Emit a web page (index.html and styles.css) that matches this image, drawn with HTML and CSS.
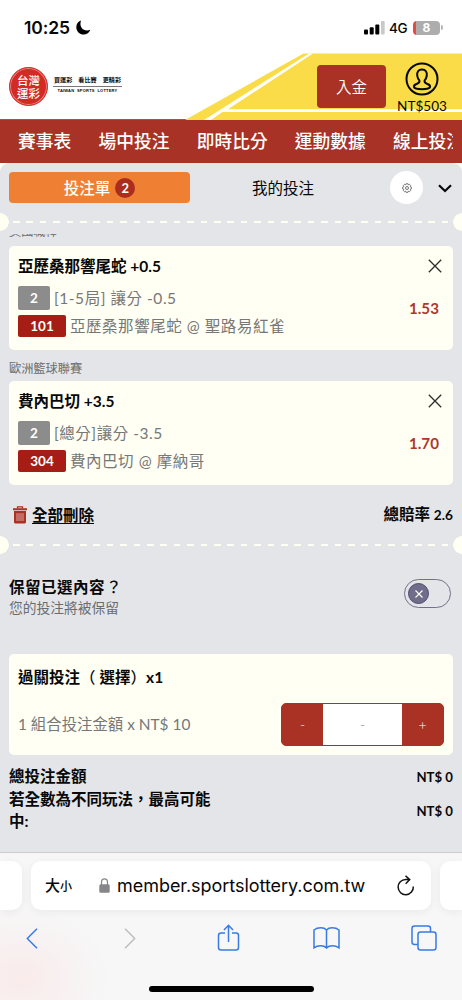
FILE: index.html
```html
<!DOCTYPE html>
<html lang="zh-Hant">
<head>
<meta charset="utf-8">
<meta name="viewport" content="width=device-width, initial-scale=1">
<title>台灣運彩</title>
<link rel="stylesheet" href="styles.css">
</head>
<body>
<div class="status">
  <span class="clock">10:25</span>
  <svg class="moon" width="15" height="15" viewBox="0 0 15 15"><path d="M5 .5C2 1.500 .3 4 .3 7.200C.3 11.300 3.500 14.500 7.600 14.500C10.800 14.500 13.300 12.800 14.300 9.800C10.500 11.100 7.600 10.200 5.900 8.200C4.300 6.300 4 3.400 5 .5Z"/></svg>
  <svg class="signal" width="21" height="14" viewBox="0 0 21 14"><rect x="0" y="8.500" width="4" height="5" rx="1"/><rect x="5.700" y="6.300" width="4" height="7.200" rx="1"/><rect x="11.300" y="3.500" width="4" height="10" rx="1"/><rect x="17" y="0" width="3.700" height="13.500" rx="1" fill="#c9c9c9"/></svg>
  <span class="network">4G</span>
  <span class="battery">8</span><span class="battery-tip"></span>
</div>
<header class="header">
  <svg class="stripes" width="462" height="67" viewBox="0 0 462 67"><path d="M303.500 .5H462V67H185Z" fill="#f9dc47"/><path d="M309 .5H313L228 56.200H462V59H222.500L211 67H204Z" fill="#fffefa"/></svg>
  <div class="brand">
    <div class="seal"><span>台灣</span><span>運彩</span></div>
    <div class="motto"><div class="motto-zh"><span>買運彩</span><span>看比賽</span><span>更精彩</span></div><div class="motto-en">TAIWAN&nbsp; SPORTS&nbsp; LOTTERY</div></div>
  </div>
  <button class="deposit">入金</button>
  <div class="account">
    <svg width="34" height="34" viewBox="0 0 34 34" fill="none" stroke="#080808" stroke-width="2"><circle cx="17" cy="17" r="15.500"/><path d="M17 7.500C13.300 7.500 11.800 10.200 12.200 13.500C12.500 15.800 13.300 17.300 14.400 18.400C15 20.600 13.700 21.100 11.500 22C9.400 22.800 8.600 23.600 9 25.200C9.500 26.600 13 27.200 17 27.200S24.500 26.600 25 25.200C25.400 23.600 24.600 22.800 22.500 22C20.300 21.100 19 20.600 19.600 18.400C20.700 17.300 21.500 15.800 21.800 13.500C22.200 10.200 20.700 7.500 17 7.500Z"/></svg>
    <span>NT$503</span>
  </div>
</header>
<nav class="nav"><div class="nav-list"><span>賽事表</span><span>場中投注</span><span>即時比分</span><span>運動數據</span><span>線上投注</span></div></nav>
<main class="slip">
  <div class="tabs">
    <div class="tab-active">投注單<span class="count">2</span></div>
    <div class="tab">我的投注</div>
    <div class="gear"><svg width="10" height="10" viewBox="0 0 10 10" fill="none" stroke="#555" stroke-width=".8"><path d="M4.200 .7H5.800L6.200 1.800L7.400 1.200L8.700 2.500L8.200 3.700L9.400 4.200V5.800L8.200 6.200L8.700 7.500L7.500 8.700L6.200 8.200L5.800 9.400H4.200L3.700 8.200L2.500 8.700L1.300 7.500L1.800 6.200L.6 5.800V4.200L1.800 3.700L1.300 2.500L2.500 1.300L3.700 1.800Z"/><circle cx="5" cy="5" r="1.500"/></svg></div>
    <svg class="chevron" width="14" height="9" viewBox="0 0 14 9"><path d="M1 1.200L7 7L13 1.200" fill="none" stroke="#080808" stroke-width="2.200"/></svg>
  </div>
  <div class="divider"></div>
  <div class="bets">
    <div class="league first">美國職棒</div>
    <section class="card">
      <div class="pick">
        <h2>亞歷桑那響尾蛇 +0.5</h2>
        <div class="line"><span class="tag">2</span><span class="text">[1-5局] 讓分 -0.5</span></div>
        <div class="line"><span class="tag code">101</span><span class="text">亞歷桑那響尾蛇 @ 聖路易紅雀</span></div>
      </div>
      <div class="side"><svg width="14" height="14" viewBox="0 0 14 14"><path d="M.8.8L13.200 13.200M13.200.8L.8 13.200" stroke="#2d2d2b" stroke-width="1.300"/></svg><b>1.53</b></div>
    </section>
    <div class="league">歐洲籃球聯賽</div>
    <section class="card">
      <div class="pick">
        <h2>費內巴切 +3.5</h2>
        <div class="line"><span class="tag">2</span><span class="text">[總分]讓分 -3.5</span></div>
        <div class="line"><span class="tag code">304</span><span class="text">費內巴切 @ 摩納哥</span></div>
      </div>
      <div class="side"><svg width="14" height="14" viewBox="0 0 14 14"><path d="M.8.8L13.200 13.200M13.200.8L.8 13.200" stroke="#2d2d2b" stroke-width="1.300"/></svg><b>1.70</b></div>
    </section>
  </div>
  <div class="actions">
    <svg width="14" height="18" viewBox="0 0 14 18"><path d="M4.500 2.500V.8H9.500V2.500" fill="none" stroke="#aa3123" stroke-width="1.200"/><path d="M0 2.200H14V4.200H0ZM1 5H13V16Q13 17.500 11.500 17.500H2.500Q1 17.500 1 16Z" fill="#aa3123"/><path d="M4 7.200V15M6 7.200V15M8 7.200V15M10 7.200V15" stroke="#e8c8c4" stroke-width=".8"/></svg>
    <a class="delete">全部刪除</a>
    <span class="odds">總賠率 <span class="odds-value">2.6</span></span>
  </div>
  <div class="divider"></div>
  <div class="keep">
    <div><h2 class="keep-title">保留已選內容<span class="question">？</span></h2><p>您的投注將被保留</p></div>
    <div class="toggle"><span class="knob"><svg width="10" height="10" viewBox="0 0 10 10"><path d="M1.500 1.500L8.500 8.500M8.500 1.500L1.500 8.500" stroke="#fff" stroke-width="1.100"/></svg></span></div>
  </div>
  <section class="stake">
    <h2>過關投注<span class="choice">（</span>選擇<span class="choice-end">）</span>x1</h2>
    <div class="stake-row"><span class="formula">1 組合投注金額 x NT$ 10</span>
      <div class="stepper"><span>-</span><span class="amount">-</span><span>+</span></div>
    </div>
  </section>
  <div class="total"><span>總投注金額</span><span class="money">NT$ 0</span></div>
  <div class="total"><span class="win">若全數為不同玩法，最高可能中:</span><span class="money">NT$ 0</span></div>
</main>
<footer class="browser">
  <div class="address-row">
    <div class="edge left"></div>
    <div class="address">
      <span class="size">大<small>小</small></span>
      <svg class="lock" width="11" height="15" viewBox="0 0 11 15"><path d="M2.500 7V4A3 3.200 0 0 1 8.500 4V7" fill="none" stroke="#85858a" stroke-width="1.200"/><rect x=".3" y="6.200" width="10.400" height="8.500" rx="1.500" fill="#85858a"/></svg>
      <span class="url">member.sportslottery.com.tw</span>
      <svg class="reload" width="18" height="21" viewBox="0 0 18 21" fill="none" stroke="#111" stroke-width="1.500"><path d="M16.300 11.500A7.600 7.600 0 1 1 8.700 4.500H12.500M8.500 .7L12.700 4.600L8.700 8.700"/></svg>
    </div>
    <div class="edge right"></div>
  </div>
  <div class="tools">
    <svg width="12" height="21" viewBox="0 0 12 21"><path d="M11 .8L1.300 10.500L11 20.200"/></svg>
    <svg class="off" width="12" height="21" viewBox="0 0 12 21"><path d="M1 .8L10.700 10.500L1 20.200"/></svg>
    <svg width="23" height="28" viewBox="0 0 22 28"><path d="M7.500 9H3.500Q1 9 1 11.500V23.500Q1 26 3.500 26H18.500Q21 26 21 23.500V11.500Q21 9 18.500 9H14.500M11 18V1.500M6.500 6L11 1.300L15.500 6"/></svg>
    <svg width="27" height="22" viewBox="0 0 27 22"><path d="M13.500 3Q11.500 .8 8 .8Q3.500 .8 1 3V20.800Q4 18.800 7.500 18.800Q11.500 18.800 13.500 21Q15.500 18.800 19.500 18.800Q23 18.800 26 20.800V3Q23.500 .8 19 .8Q15.500 .8 13.500 3V21"/></svg>
    <svg width="26" height="26" viewBox="0 0 26 26"><path d="M7 19.500H3.500Q1 19.500 1 17V3.500Q1 1 3.500 1H17Q19.500 1 19.500 3.500V7"/><rect x="7" y="7" width="18" height="18" rx="2.500"/></svg>
  </div>
  <div class="home"></div>
</footer>
</body>
</html>
```
FILE: styles.css
```css
* { box-sizing: border-box; }
body { margin: 0; width: 462px; height: 1000px; overflow: hidden; background: #fff; color: #080808; font-family: Lato, "Noto Sans CJK TC", sans-serif; }
svg { display: block; flex: none; }
h2, p { margin: 0; white-space: nowrap; }
h2 { font-size: 15.500px; line-height: 22px; font-weight: 700; }

.status { display: flex; align-items: center; height: 53px; padding: 2px 19px 0 24px; font-family: Inter, sans-serif; }
.clock { width: 48px; font-size: 17.500px; font-weight: 600; letter-spacing: -.1px; }
.moon { margin-left: 4px; }
.signal { margin-left: auto; }
.network { margin-left: 4px; width: 20px; font-size: 13.500px; letter-spacing: -.3px; font-weight: 500; }
.battery { margin-left: 4px; width: 27px; height: 14px; border-radius: 4px; background: linear-gradient(90deg, #e34b42 3px, #adadad 3px); color: #fff; text-align: center; font-size: 12px; line-height: 14px; font-weight: 700; }
.battery-tip { width: 2px; height: 5px; margin-left: 1px; border-radius: 0 2px 2px 0; background: #b5b5b5; }

.header { position: relative; display: flex; height: 66px; background: #fff; }
.stripes { position: absolute; left: 0; top: 0; }
.brand, .deposit, .account { position: relative; }
.brand { display: flex; width: 308px; padding: 14px 0 0 9px; }
.seal { display: flex; flex-direction: column; align-items: center; width: 39px; height: 39px; padding-top: 6px; border-radius: 50%; border: 1px solid #d22b26; background: #d22b26; box-shadow: inset 0 0 0 1px #e88782; color: #fff; font: 500 11.500px/12.500px "Noto Sans CJK TC", sans-serif; }
.motto { width: 69px; margin: 8px 0 0 5px; white-space: nowrap; }
.motto-zh { display: flex; justify-content: space-between; height: 12px; padding: 0 1px; border-bottom: 1px solid #777; font: 700 6.100px/10px "Noto Sans CJK TC", sans-serif; }
.motto-en { text-align: center; font: 700 4px/8px "Liberation Sans", sans-serif; letter-spacing: .22px; }
.deposit { width: 69px; height: 43px; margin: 12px 0 0 9px; padding: 0; border: 0; border-radius: 4px; background: #a93225; color: #fff; font: 350 15.500px/43px "Noto Sans CJK TC", sans-serif; }
.account { display: flex; flex-direction: column; align-items: center; width: 72px; padding-top: 9px; font: 13.600px/17px Lato, sans-serif; }
.account span { margin-top: 2px; }

.nav { height: 44px; padding: 0 9px; background: #a73225; border-top: 1px solid #c24b29; }
.nav-list { display: flex; gap: 27.200px; padding-left: 9px; overflow: hidden; white-space: nowrap; color: #fff; font: 500 17.750px/41px "Noto Sans CJK TC", sans-serif; }

.slip { height: 689px; border-radius: 9px 9px 0 0; background: #e4e5e8; overflow: hidden; }
.tabs { display: flex; align-items: center; height: 50px; padding: 0 10px 1px 9px; }
.tab-active { display: flex; align-items: center; justify-content: center; gap: 5px; width: 181px; height: 31px; border-radius: 4px; background: #ef8033; color: #fffff0; font: 500 15.500px/31px "Noto Sans CJK TC", sans-serif; }
.count { width: 20px; height: 20px; border-radius: 50%; background: #ad2c20; text-align: center; font: 700 13px/20px Lato, sans-serif; }
.tab { margin-left: 62px; width: 138px; font: 400 15.500px/31px "Noto Sans CJK TC", sans-serif; }
.gear { display: flex; align-items: center; justify-content: center; width: 33px; height: 33px; border-radius: 50%; background: #fff; }
.chevron { margin: 2px 0 0 15px; }
.divider { height: 18px; background: radial-gradient(circle at 0 50%, #fffff2 8.500px, transparent 9px), radial-gradient(circle at 100% 50%, #fffff2 8.500px, transparent 9px), repeating-linear-gradient(90deg, #fffff2 0 6.700px, transparent 6.700px 13.400px) 13.300px 8px / 437px 2px no-repeat; }

.bets { height: 251px; margin-top: 3px; padding: 0 9px; overflow: hidden; }
.league { height: 16px; margin: 10px 0 5.500px; color: #6b6c6e; font: 12.200px/16px "Noto Sans CJK TC", sans-serif; }
.league.first { margin: -11px 0 6.500px; }
.card { display: flex; justify-content: space-between; height: 104px; padding: 9px 9px 0; border-radius: 5px; background: #fffff4; }
.line { display: flex; align-items: center; gap: 4px; height: 28px; white-space: nowrap; color: #777; font-size: 15.500px; line-height: 22px; letter-spacing: .54px; }
.text { padding-bottom: 0; }
.pick h2 + .line { margin-top: 7px; }
.tag { width: 32px; height: 24px; border-radius: 2px; background: #8c8c8c; color: #fff; text-align: center; font: 700 13.500px/24px Lato, sans-serif; letter-spacing: 0; }
.code { width: 48px; height: 22px; background: #a51d14; line-height: 23px; }
.side { display: flex; flex-direction: column; align-items: flex-end; width: 60px; padding: 4px 2px 0 0; }
.side b { margin: 24px 3px 0 0; color: #ad382b; font-size: 15.200px; line-height: 22px; }
.actions { display: flex; align-items: center; height: 51px; padding: 8px 9px 0 13px; font-size: 15.500px; font-weight: 700; line-height: 22px; }
.delete { margin-left: 5px; text-decoration: underline; text-underline-offset: 2px; text-decoration-thickness: 1px; }
.odds { margin-left: auto; }
.odds-value { font-size: 13.700px; }

.keep { display: flex; justify-content: space-between; height: 100px; padding: 22px 11px 0 9px; }
.keep-title { letter-spacing: .5px; }
.keep p { color: #6b6c6e; font-size: 13.750px; line-height: 20px; }
.question { margin-left: 1px; font-weight: 500; }
.toggle { width: 47px; height: 29px; margin-top: 3px; padding: 4px 3px; border: 1px solid #73708e; border-radius: 15px; }
.knob { display: flex; align-items: center; justify-content: center; width: 21px; height: 21px; margin-top: -1px; border: 1px solid #4c4b6c; border-radius: 50%; background: #706d8b; }
.stake { height: 101px; margin: 0 9px; padding: 12px 9px 0; border-radius: 5px; background: #fffff4; }
.choice { margin-right: 4px; font-weight: 500; }
.choice-end { font-weight: 500; }
.stake-row { display: flex; justify-content: space-between; align-items: center; margin-top: 15px; }
.formula { padding-bottom: 4px; color: #777; font-size: 15.400px; }
.stepper { display: grid; grid-template-columns: 41px 1fr 41px; width: 163px; height: 43px; border: 1px solid #a93225; border-radius: 5px; background: #a93225; color: #fff; text-align: center; font: 300 14px/41px Lato, sans-serif; }
.amount { background: #fff; color: #777; }
.total { display: flex; justify-content: space-between; align-items: center; padding: 0 9px; font-size: 15.500px; line-height: 22.500px; font-weight: 700; }
.stake + .total { height: 22.500px; margin-top: 10px; }
.win { width: 210px; }
.money { padding-top: 2px; font-size: 13.200px; }

.browser { height: 148px; border-top: 1px solid #cbcccf; background: radial-gradient(ellipse 90px 70px at 20px 125px, #f9ebea, #f7f7f800), #f7f7f8; }
.address-row { display: flex; gap: 9px; height: 58px; padding-top: 8px; }
.address, .edge { height: 49px; background: #fff; box-shadow: 0 2px 10px #0000000f; }
.edge { width: 22px; }
.left { border-radius: 0 10px 10px 0; }
.right { border-radius: 10px 0 0 10px; }
.address { display: flex; align-items: center; width: 400px; padding: 0 16px 0 14px; border-radius: 10px; }
.size { width: 54px; font: 500 15px/24px "Noto Sans CJK TC", sans-serif; white-space: nowrap; }
.size small { font-size: 12px; }
.url { margin-left: 7px; font: 18px/24px Inter, sans-serif; letter-spacing: -.04px; white-space: nowrap; }
.reload { margin-left: auto; }
.tools { display: grid; grid-template-columns: repeat(5, 98px); justify-content: center; justify-items: center; align-items: center; height: 54px; margin-left: -6px; fill: none; stroke: #397be3; stroke-width: 1.500; }
.off { stroke: #bebebf; }
.home { width: 165px; height: 6px; margin: 20.500px auto 0; border-radius: 3px; background: #000; }
```
